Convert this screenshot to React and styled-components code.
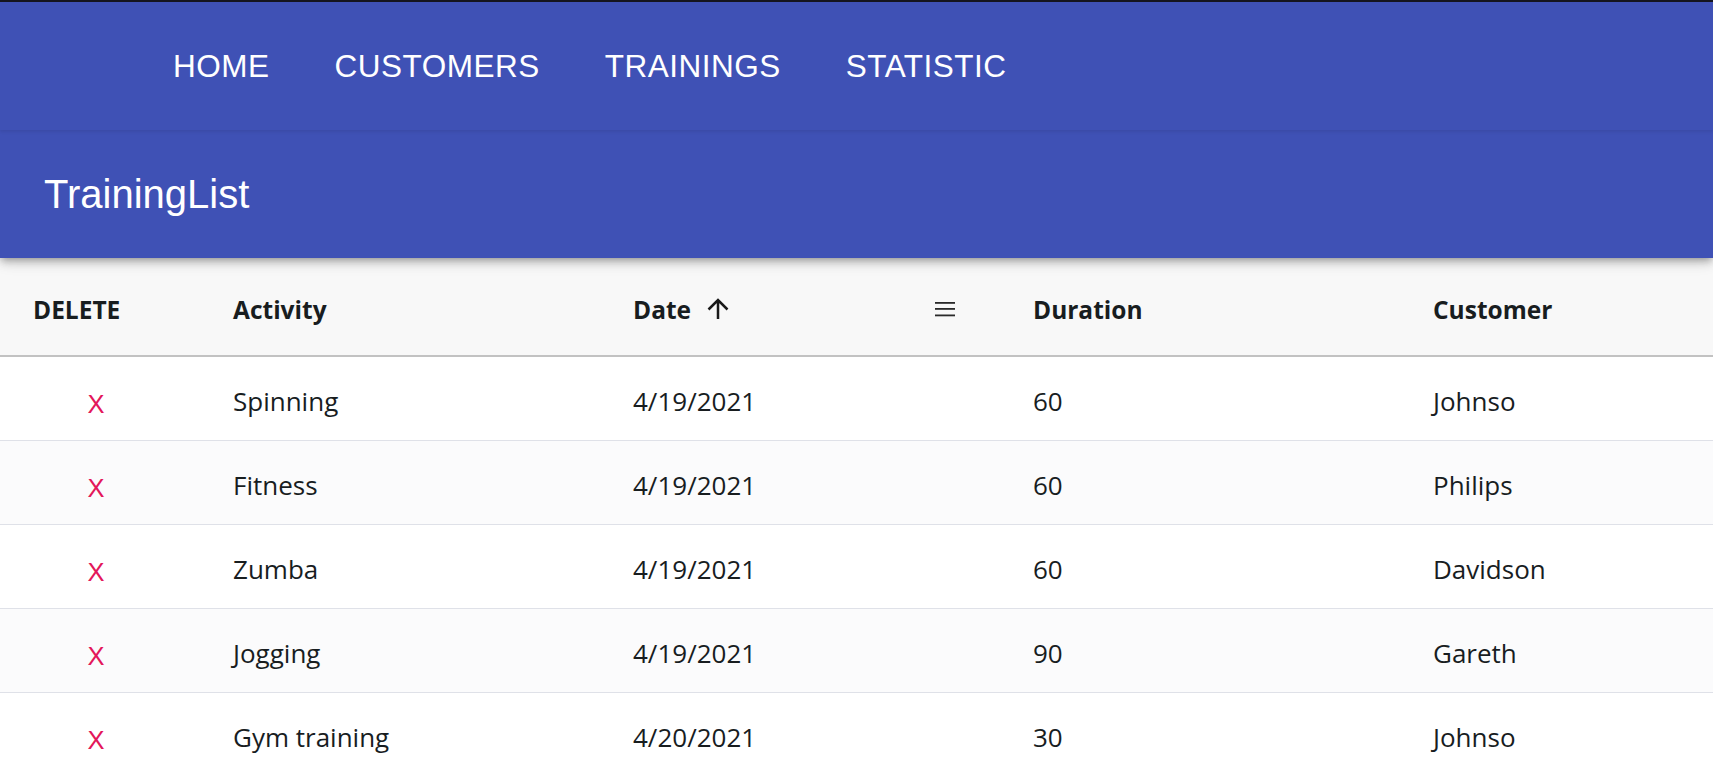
import React from 'react';
import styled, { createGlobalStyle } from 'styled-components';

const trainings = [
  { activity: 'Spinning', date: '4/19/2021', duration: 60, customer: 'Johnso' },
  { activity: 'Fitness', date: '4/19/2021', duration: 60, customer: 'Philips' },
  { activity: 'Zumba', date: '4/19/2021', duration: 60, customer: 'Davidson' },
  { activity: 'Jogging', date: '4/19/2021', duration: 90, customer: 'Gareth' },
  { activity: 'Gym training', date: '4/20/2021', duration: 30, customer: 'Johnso' },
];

const App = () => {
  return (
    <>
      <GlobalStyle />
      <NavBar>
        <NavButton>Home</NavButton>
        <NavButton>Customers</NavButton>
        <NavButton>Trainings</NavButton>
        <NavButton>Statistic</NavButton>
      </NavBar>
      <TitleBar>
        <Title>TrainingList</Title>
      </TitleBar>
      <Grid>
        <HeaderRow>
          <HeaderCell>DELETE</HeaderCell>
          <HeaderCell>Activity</HeaderCell>
          <HeaderCell>
            <HeaderLabel>
              Date
              <svg width="22" height="22" viewBox="0 0 22 22">
                <path d="M11 21V2.5M1.5 11.5L11 2L20.5 11.5" stroke="#1a1a1a" strokeWidth="2.5" fill="none" />
              </svg>
            </HeaderLabel>
            <svg width="20" height="16" viewBox="0 0 20 16">
              <rect x="0" y="1" width="20" height="1.8" fill="#2a2a2a" />
              <rect x="0" y="7" width="20" height="1.8" fill="#2a2a2a" />
              <rect x="0" y="13.5" width="20" height="1.8" fill="#2a2a2a" />
            </svg>
          </HeaderCell>
          <HeaderCell>Duration</HeaderCell>
          <HeaderCell>Customer</HeaderCell>
        </HeaderRow>
        {trainings.map((t, i) => (
          <Row key={i} odd={i % 2 === 1}>
            <Cell>
              <DeleteButton>X</DeleteButton>
            </Cell>
            <Cell>{t.activity}</Cell>
            <Cell>{t.date}</Cell>
            <Cell>{t.duration}</Cell>
            <Cell>{t.customer}</Cell>
          </Row>
        ))}
      </Grid>
    </>
  );
};

export default App;

const GlobalStyle = createGlobalStyle`
  body {
    margin: 0;
    background: #fff;
    font-family: 'Open Sans', sans-serif;
    overflow: hidden;
  }
`;

const NavBar = styled.nav`
  position: relative;
  z-index: 2;
  display: flex;
  align-items: center;
  gap: 65px;
  height: 128px;
  padding-left: 173px;
  background-color: #3f51b5;
  border-top: 2px solid #15151f;
  box-shadow: 0 2px 3px rgba(0, 0, 0, 0.08);
`;

const NavButton = styled.button`
  font-family: 'Liberation Sans', Arial, sans-serif;
  font-size: 31.5px;
  letter-spacing: 0.5px;
  text-transform: uppercase;
  color: #fff;
  background: none;
  border: none;
  padding: 0;
  cursor: pointer;
`;

const TitleBar = styled.header`
  position: relative;
  z-index: 1;
  display: flex;
  align-items: center;
  height: 128px;
  padding-left: 44px;
  background-color: #3f51b5;
  box-shadow: 0 3px 7px -2px rgba(0, 0, 0, 0.3), 0 6px 9px 0 rgba(0, 0, 0, 0.12),
    0 2px 17px 0 rgba(0, 0, 0, 0.1);
`;

const Title = styled.h1`
  margin: 0;
  font-family: 'Liberation Sans', Arial, sans-serif;
  font-size: 40px;
  font-weight: 400;
  color: #fff;
`;

const Grid = styled.section`
  width: 100%;
`;

const columns = '200px 400px 400px 400px 1fr';

const HeaderRow = styled.div`
  display: grid;
  grid-template-columns: ${columns};
  height: 97px;
  background: #f8f8f8;
  border-bottom: 2px solid #c2c2c2;
`;

const HeaderCell = styled.div`
  display: flex;
  align-items: center;
  justify-content: space-between;
  padding: 5px 45px 0 33px;
  font-size: 24.5px;
  font-weight: 700;
  color: #181d1f;
`;

const HeaderLabel = styled.span`
  display: flex;
  align-items: center;
  gap: 16px;
`;

const Row = styled.div`
  display: grid;
  grid-template-columns: ${columns};
  height: 84px;
  box-sizing: border-box;
  background: ${(p) => (p.odd ? '#fbfbfc' : '#fff')};
  border-bottom: 1px solid #dfe1e8;
`;

const Cell = styled.div`
  display: flex;
  align-items: center;
  padding: 5px 33px 0 33px;
  font-size: 26px;
  color: #181d1f;
`;

const DeleteButton = styled.button`
  width: 126px;
  padding: 6px 0 0;
  background: none;
  border: none;
  font-family: 'Liberation Sans', Arial, sans-serif;
  font-size: 25.5px;
  color: #e3175a;
  cursor: pointer;
`;
